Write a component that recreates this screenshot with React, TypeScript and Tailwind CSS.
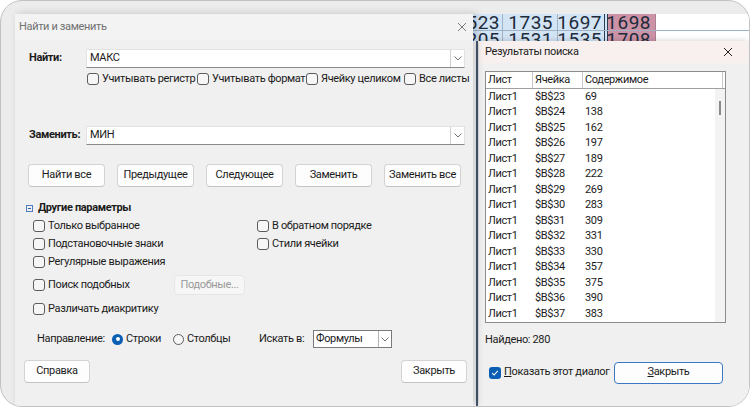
import React from "react";

function Cb({ checked = false }: { checked?: boolean }) {
  if (checked) {
    return (
      <span className="w-[12px] h-[12px] rounded-[3px] bg-[#0a5fb4] shrink-0 flex items-center justify-center">
        <svg width="8" height="8" viewBox="0 0 8 8">
          <polyline points="1.2,4.2 3.1,6 6.8,1.8" fill="none" stroke="white" strokeWidth="1.1" />
        </svg>
      </span>
    );
  }
  return <span className="w-[12px] h-[12px] rounded-[3px] border border-[#5c5c5c] bg-[#f6f6f6] shrink-0" />;
}

function Chevron() {
  return (
    <svg width="8" height="5" viewBox="0 0 8 5">
      <polyline points="0.5,0.5 4,4 7.5,0.5" fill="none" stroke="#606060" strokeWidth="0.9" />
    </svg>
  );
}

function Btn({ children, w, className = "" }: { children: React.ReactNode; w: string; className?: string }) {
  return (
    <div
      className={`${w} h-[23px] rounded-[4px] border border-[#d3d3d3] border-b-[#c4c4c4] bg-[#fdfdfd] flex items-center justify-center text-[#1b1b1b] whitespace-nowrap ${className}`}
    >
      {children}
    </div>
  );
}

function Combo({ value }: { value: string }) {
  return (
    <div className="w-[379px] h-[19px] bg-white border border-[#e2e2e2] border-b-[#8a8a8a] flex">
      <div className="flex-1 pl-[3px] flex items-center text-[#1b1b1b]">{value}</div>
      <div className="w-[14px] border-l border-[#d0d0d0] flex items-center justify-center">
        <Chevron />
      </div>
    </div>
  );
}

function CheckLabel({ label, className = "" }: { label: string; className?: string }) {
  return (
    <div className={`flex items-center gap-[3px] text-[#1b1b1b] whitespace-nowrap ${className}`}>
      <Cb />
      <span>{label}</span>
    </div>
  );
}

const rows = [
  ["$B$23", "69"],
  ["$B$24", "138"],
  ["$B$25", "162"],
  ["$B$26", "197"],
  ["$B$27", "189"],
  ["$B$28", "222"],
  ["$B$29", "269"],
  ["$B$30", "283"],
  ["$B$31", "309"],
  ["$B$32", "331"],
  ["$B$33", "330"],
  ["$B$34", "357"],
  ["$B$35", "375"],
  ["$B$36", "390"],
  ["$B$37", "383"],
];

function SheetRow({ cells }: { cells: string[] }) {
  return (
    <div className="h-[17px] flex border-b border-[#9fb3c8] text-[19px] leading-[17px] tracking-[0.5px] text-[#1d2b3a] whitespace-nowrap">
      <div className="w-[30px] bg-[#d3e4f5] border-r border-[#9fb3c8] flex justify-end pr-[2px] overflow-hidden">{cells[0]}</div>
      <div className="w-[55px] bg-[#d3e4f5] border-r border-[#9fb3c8] flex justify-end pr-[4px]">{cells[1]}</div>
      <div className="w-[50px] bg-[#d3e4f5] border-r-[4px] border-double border-r-[#2d3f55] flex justify-end pr-[2px]">{cells[2]}</div>
      <div className="w-[48px] bg-[#cc93a6] border-r border-[#b08090] flex justify-end pr-[4px]">{cells[3]}</div>
      <div className="flex-1 bg-white" />
    </div>
  );
}

export default function App() {
  return (
    <div className="w-[750px] h-[407px] bg-white font-['Roboto',sans-serif] text-[11px] tracking-[-0.35px] overflow-hidden">
      <div className="w-full h-full rounded-[22px] border border-[#c2c2c2] bg-[#ececec] overflow-hidden pt-[13px] pl-[14px] flex">
        {/* Find & Replace dialog */}
        <div className="w-[458px] h-full bg-[#f0f0f0] flex flex-col relative z-10 shadow-[3px_0_8px_rgba(0,0,0,0.18)] shrink-0">
          <div className="h-[26px] bg-[#f3f3f3] flex items-center justify-between pl-[4px] pr-[6px]">
            <span className="text-[#707070]">Найти и заменить</span>
            <svg width="10" height="10" viewBox="0 0 10 10">
              <path d="M1 1 L9 9 M9 1 L1 9" stroke="#7a7a7a" strokeWidth="1" />
            </svg>
          </div>

          <div className="mt-[9px] flex items-center pl-[14px]">
            <span className="w-[57px] font-bold text-[#1b1b1b]">Найти:</span>
            <Combo value="МАКС" />
          </div>

          <div className="mt-[4px] h-[14px] flex items-center pl-[72px]">
            <CheckLabel label="Учитывать регистр" className="w-[110px]" />
            <CheckLabel label="Учитывать формат" className="w-[109px]" />
            <CheckLabel label="Ячейку целиком" className="w-[98px]" />
            <CheckLabel label="Все листы" />
          </div>

          <div className="mt-[40px] flex items-center pl-[14px]">
            <span className="w-[57px] font-bold text-[#1b1b1b]">Заменить:</span>
            <Combo value="МИН" />
          </div>

          <div className="mt-[19px] flex gap-[12px] pl-[13px]">
            <Btn w="w-[77px]">Найти все</Btn>
            <Btn w="w-[77px]">Предыдущее</Btn>
            <Btn w="w-[77px]">Следующее</Btn>
            <Btn w="w-[77px]">Заменить</Btn>
            <Btn w="w-[77px]">Заменить все</Btn>
          </div>

          <div className="mt-[14px] h-[14px] flex items-center pl-[11px] gap-[5px]">
            <span className="w-[7px] h-[7px] border border-[#4d7fbf] flex items-center justify-center">
              <span className="w-[3px] h-px bg-[#2a5fa8]" />
            </span>
            <span className="font-bold text-[#1b1b1b]">Другие параметры</span>
          </div>

          <div className="mt-[2px] flex pl-[18px]">
            <div className="w-[224px] flex flex-col">
              <CheckLabel label="Только выбранное" className="h-[18px]" />
              <CheckLabel label="Подстановочные знаки" className="h-[18px]" />
              <CheckLabel label="Регулярные выражения" className="h-[18px]" />
            </div>
            <div className="flex flex-col">
              <CheckLabel label="В обратном порядке" className="h-[18px]" />
              <CheckLabel label="Стили ячейки" className="h-[18px]" />
            </div>
          </div>

          <div className="mt-[4px] h-[20px] flex items-center pl-[18px]">
            <CheckLabel label="Поиск подобных" className="w-[141px]" />
            <div className="w-[71px] h-[20px] rounded-[4px] border border-[#e6e6e6] bg-[#f6f6f6] flex items-center justify-center text-[#9a9a9a]">
              Подобные...
            </div>
          </div>

          <div className="mt-[5px] h-[18px] flex items-center pl-[18px]">
            <CheckLabel label="Различать диакритику" />
          </div>

          <div className="mt-[12px] h-[18px] flex items-center pl-[22px] text-[#1b1b1b] whitespace-nowrap">
            <span className="w-[75px]">Направление:</span>
            <span className="w-[11px] h-[11px] rounded-full bg-[#0a5fb4] flex items-center justify-center">
              <span className="w-[4px] h-[4px] rounded-full bg-white" />
            </span>
            <span className="ml-[3px] w-[47px]">Строки</span>
            <span className="w-[11px] h-[11px] rounded-full border border-[#5c5c5c] bg-[#f6f6f6]" />
            <span className="ml-[3px] w-[72px]">Столбцы</span>
            <span className="w-[54px]">Искать в:</span>
            <div className="w-[79px] h-[18px] bg-white border border-[#7a7a7a] flex">
              <div className="flex-1 pl-[2px] flex items-center">Формулы</div>
              <div className="w-[13px] border-l border-[#b5b5b5] flex items-center justify-center">
                <Chevron />
              </div>
            </div>
          </div>

          <div className="mt-[12px] flex justify-between pl-[9px] pr-[6px]">
            <Btn w="w-[66px]">Справка</Btn>
            <Btn w="w-[66px]">Закрыть</Btn>
          </div>
        </div>

        {/* Right side: spreadsheet + results dialog */}
        <div className="flex-1 flex flex-col bg-white min-w-0">
          <div className="h-[27px] overflow-hidden shrink-0">
            <SheetRow cells={["523", "1735", "1697", "1698"]} />
            <SheetRow cells={["205", "1531", "1535", "1708"]} />
          </div>
          <div className="flex-1 flex">
            <div className="w-[6px] flex">
              <div className="w-[3px]" />
              <div className="w-[2px] bg-[#4a5f78]" />
            </div>
            <div className="flex-1 bg-[#f0f0f0] flex flex-col shadow-[-2px_0_6px_rgba(0,0,0,0.2)]">
              <div className="h-[22px] bg-[#f8f0ef] flex items-center justify-between pl-[6px] pr-[16px]">
                <span className="text-[#1b1b1b]">Результаты поиска</span>
                <svg width="10" height="10" viewBox="0 0 10 10">
                  <path d="M1 1 L9 9 M9 1 L1 9" stroke="#222" strokeWidth="1" />
                </svg>
              </div>

              <div className="mt-[8px] ml-[6px] w-[241px] h-[252px] border border-[#8c8c8c] bg-white flex flex-col text-[#1b1b1b] overflow-hidden">
                <div className="h-[17px] flex border-b border-[#a0a0a0] shrink-0">
                  <div className="w-[47px] border-r border-[#c8c8c8] pl-[2px] flex items-center">Лист</div>
                  <div className="w-[50px] border-r border-[#c8c8c8] pl-[2px] flex items-center">Ячейка</div>
                  <div className="flex-1 border-r border-[#c8c8c8] pl-[2px] flex items-center">Содержимое</div>
                  <div className="w-[2px]" />
                </div>
                <div className="flex-1 flex">
                  <div className="flex-1 flex flex-col">
                    {rows.map((r) => (
                      <div key={r[0]} className="h-[15.5px] flex items-center shrink-0">
                        <span className="w-[47px] pl-[2px]">Лист1</span>
                        <span className="w-[50px] pl-[2px]">{r[0]}</span>
                        <span className="pl-[2px]">{r[1]}</span>
                      </div>
                    ))}
                  </div>
                  <div className="w-[10px] bg-[#f3f3f3] flex justify-center">
                    <div className="mt-[12px] w-[2px] h-[14px] bg-[#8a8a8a]" />
                  </div>
                </div>
              </div>

              <div className="mt-[9px] ml-[6px] text-[#1b1b1b]">Найдено: 280</div>

              <div className="mt-[13px] flex items-center">
                <div className="ml-[10px] w-[125px] flex items-center gap-[3px] text-[#1b1b1b] whitespace-nowrap">
                  <Cb checked />
                  <span>
                    <span className="underline">П</span>оказать этот диалог
                  </span>
                </div>
                <div className="w-[109px] h-[22px] rounded-[4px] border border-[#3a78c2] bg-[#fdfdfd] flex items-center justify-center text-[#1b1b1b]">
                  <span>
                    <span className="underline">З</span>акрыть
                  </span>
                </div>
              </div>
            </div>
          </div>
        </div>
      </div>
    </div>
  );
}
